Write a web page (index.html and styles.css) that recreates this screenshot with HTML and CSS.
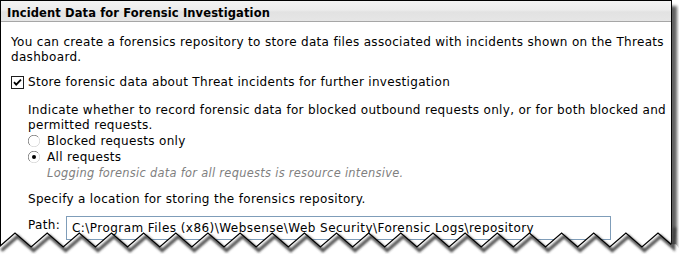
FILE: index.html
```html
<!DOCTYPE html>
<html>
<head>
<meta charset="utf-8">
<title>Incident Data for Forensic Investigation</title>
<link rel="stylesheet" href="styles.css">
</head>
<body>
<div class="frame">
  <div class="panel">
    <div class="hdr">Incident Data for Forensic Investigation</div>
    <div class="content">
      <p class="intro">You can create a forensics repository to store data files associated with incidents shown on the Threats<br>dashboard.</p>
      <div class="chk">
        <svg class="cb" width="13" height="13" viewBox="0 0 13 13"><rect x="0.5" y="0.5" width="12" height="12" fill="#fff" stroke="#1e1e1e"/><path d="M3 6.2 L5.2 8.6 L10 3.6" fill="none" stroke="#000" stroke-width="1.8"/></svg>
        <span>Store forensic data about Threat incidents for further investigation</span>
      </div>
      <div class="sub">
        <p class="indicate">Indicate whether to record forensic data for blocked outbound requests only, or for both blocked and<br>permitted requests.</p>
        <div class="radio">
          <svg class="rb" width="12" height="12" viewBox="0 0 12 12"><circle cx="6" cy="6" r="5.5" fill="#fff"/><path d="M1.9 10.1 A5.5 5.5 0 0 1 10.1 1.9" fill="none" stroke="#8a8a8a"/><path d="M10.1 1.9 A5.5 5.5 0 0 1 1.9 10.1" fill="none" stroke="#dcdcdc"/></svg>
          <span>Blocked requests only</span>
        </div>
        <div class="radio">
          <svg class="rb" width="12" height="12" viewBox="0 0 12 12"><circle cx="6" cy="6" r="5.5" fill="#fff"/><path d="M1.9 10.1 A5.5 5.5 0 0 1 10.1 1.9" fill="none" stroke="#8a8a8a"/><path d="M10.1 1.9 A5.5 5.5 0 0 1 1.9 10.1" fill="none" stroke="#dcdcdc"/><circle cx="6" cy="6" r="2" fill="#000"/></svg>
          <span>All requests</span>
        </div>
        <div class="hint">Logging forensic data for all requests is resource intensive.</div>
        <p class="spec">Specify a location for storing the forensics repository.</p>
        <div class="path">
          <span class="plabel">Path:</span>
          <div class="input">C:\Program Files (x86)\Websense\Web Security\Forensic Logs\repository</div>
        </div>
      </div>
    </div>
  </div>
  <svg class="tear" width="679" height="30" viewBox="0 0 679 30">
    <defs>
      <filter id="blur" x="-5%" y="-100%" width="110%" height="300%"><feGaussianBlur stdDeviation="1.3"/></filter>
    </defs>
    <polygon fill="#fff" points="-2,23 -1.1,23 15,9 31.1,23 47.2,9 63.2,23 79.3,9 95.4,23 111.5,9 127.5,23 143.6,9 159.7,23 175.8,9 191.8,23 207.9,9 224,23 240.1,9 256.1,23 272.2,9 288.3,23 304.4,9 320.4,23 336.5,9 352.6,23 368.7,9 384.7,23 400.8,9 416.9,23 433,9 449,23 465.1,9 481.2,23 497.3,9 513.3,23 529.4,9 545.5,23 561.6,9 577.6,23 593.7,9 609.8,23 625.9,9 641.9,23 658,9 671,20.3 676,20.3 681,27 681,31 -2,31"/>
    <polyline filter="url(#blur)" transform="translate(2.5,3.5)" fill="none" stroke="#3a3a3a" stroke-width="3.5" stroke-opacity="0.85" points="-1.1,23 15,9 31.1,23 47.2,9 63.2,23 79.3,9 95.4,23 111.5,9 127.5,23 143.6,9 159.7,23 175.8,9 191.8,23 207.9,9 224,23 240.1,9 256.1,23 272.2,9 288.3,23 304.4,9 320.4,23 336.5,9 352.6,23 368.7,9 384.7,23 400.8,9 416.9,23 433,9 449,23 465.1,9 481.2,23 497.3,9 513.3,23 529.4,9 545.5,23 561.6,9 577.6,23 593.7,9 609.8,23 625.9,9 641.9,23 658,9 671,20.3 672,0"/>
    <polyline fill="none" stroke="#000" stroke-width="1.3" points="-1.1,23 15,9 31.1,23 47.2,9 63.2,23 79.3,9 95.4,23 111.5,9 127.5,23 143.6,9 159.7,23 175.8,9 191.8,23 207.9,9 224,23 240.1,9 256.1,23 272.2,9 288.3,23 304.4,9 320.4,23 336.5,9 352.6,23 368.7,9 384.7,23 400.8,9 416.9,23 433,9 449,23 465.1,9 481.2,23 497.3,9 513.3,23 529.4,9 545.5,23 561.6,9 577.6,23 593.7,9 609.8,23 625.9,9 641.9,23 658,9 671.2,20.5"/>
  </svg>
</div>
</body>
</html>
```

FILE: styles.css
```css
html, body {
  margin: 0;
  padding: 0;
  background: #fff;
}

body {
  font-family: "DejaVu Sans", Verdana, sans-serif;
  font-size: 12px;
  letter-spacing: 0.32px;
  line-height: 15px;
  color: #000;
}

.frame {
  position: relative;
  width: 679px;
  height: 254px;
  overflow: hidden;
}

.panel {
  width: 670px;
  height: 280px;
  border: 1px solid #000;
  border-bottom: none;
  background: #fff;
  box-shadow: 5px 6px 3px rgba(0, 0, 0, 0.62);
}

.hdr {
  height: 18px;
  padding: 2px 0 0 6px;
  line-height: 20px;
  font-weight: bold;
  font-size: 11.5px;
  letter-spacing: 0.12px;
  white-space: nowrap;
  background: linear-gradient(#f3f3f3 0%, #ececec 45%, #e2e2e2 55%, #e6e6e6 100%);
  border-bottom: 1px solid #a6a6a6;
}

.content {
  padding: 13px 0 0 10px;
}

.intro,
.indicate,
.spec {
  margin: 0;
  white-space: nowrap;
}

.chk {
  display: flex;
  align-items: center;
  height: 15px;
  margin-top: 10px;
  gap: 4px;
  white-space: nowrap;
}

.cb {
  display: block;
  flex: none;
}

.sub {
  padding-left: 17px;
}

.indicate {
  margin-top: 13px;
}

.radio {
  display: flex;
  align-items: center;
  height: 16px;
  line-height: 16px;
  gap: 7px;
  white-space: nowrap;
}

.rb {
  display: block;
  flex: none;
}

.hint {
  padding-left: 19px;
  font-size: 11.4px;
  letter-spacing: 0.3px;
  line-height: 16px;
  font-style: italic;
  color: #808080;
  white-space: nowrap;
}

.spec {
  margin-top: 11px;
}

.path {
  display: flex;
  align-items: flex-start;
  margin-top: 9px;
}

.plabel {
  flex: none;
  width: 38px;
  padding-top: 2px;
}

.input {
  box-sizing: border-box;
  width: 545px;
  height: 24px;
  padding: 4px 5px 3px;
  border: 1px solid #7f9db9;
  background: #fff;
  letter-spacing: 0.45px;
  white-space: nowrap;
  overflow: hidden;
}

.tear {
  position: absolute;
  left: 0;
  top: 224px;
  display: block;
}
```
